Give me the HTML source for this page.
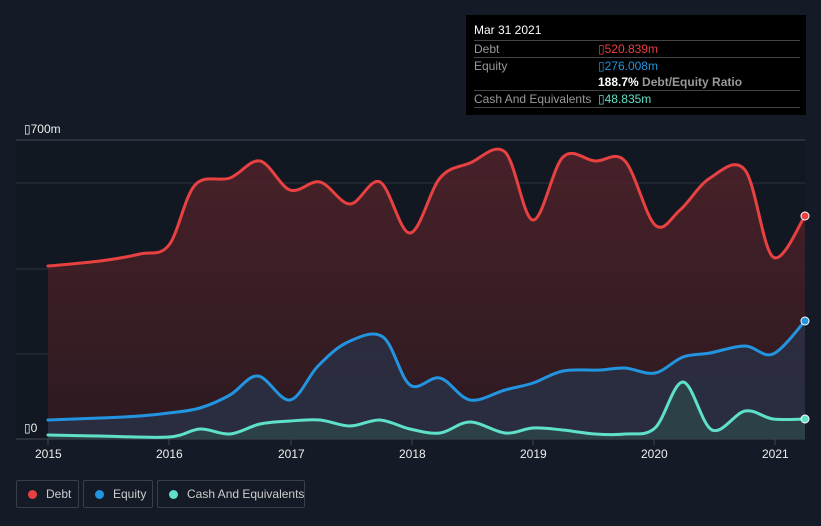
<!DOCTYPE html>
<html><head><meta charset="utf-8"><style>
body{margin:0;width:821px;height:526px;background:#151b26;font-family:"Liberation Sans",sans-serif;overflow:hidden;position:relative}
.tip{position:absolute;left:466px;top:15px;width:340px;height:100px;background:#000;color:#fff;font-size:12px}
.row{position:absolute;left:8px;right:6px;border-top:1px solid #444;height:17px;line-height:17px;color:#999;white-space:nowrap}
.row span{position:absolute;left:124px}
.leg{position:absolute;top:480px;height:26px;border:1px solid #3a404a;border-radius:2px;color:#ccc;font-size:12px;line-height:26px;white-space:nowrap}
.leg i{display:inline-block;width:9px;height:9px;border-radius:50%;margin:0 9px 0 11px;vertical-align:-1px}
.ax{position:absolute;color:#eee;font-size:12px}
</style></head><body>
<svg id="s" width="821" height="526" style="position:absolute;left:0;top:0">
<defs>
<linearGradient id="gd" x1="0" y1="0" x2="0" y2="1"><stop offset="0" stop-color="#55232a" stop-opacity=".8"/><stop offset="1" stop-color="#331a20" stop-opacity=".8"/></linearGradient>
</defs>
<rect x="16" y="140" width="789" height="299" fill="#121822"/>
<g stroke="#2c323c" stroke-width="1"><line x1="16" y1="140" x2="805" y2="140" stroke="#444a54"/><line x1="16" y1="183" x2="805" y2="183"/><line x1="16" y1="269" x2="805" y2="269"/><line x1="16" y1="354" x2="805" y2="354"/><line x1="16" y1="439" x2="805" y2="439" stroke="#444a54"/></g>
<path id="fd" fill="url(#gd)"/>
<path id="fe" fill="#2a3042" opacity=".9"/>
<path id="fc" fill="#2c4448" opacity=".9"/>
<g fill="none" stroke-width="3" stroke-linejoin="round" stroke-linecap="round">
<path id="ld" stroke="#e84142"/>
<path id="le" stroke="#2394df"/>
<path id="lc" stroke="#5fe0c8"/>
</g>
<circle cx="805" cy="216" r="4" fill="#e84142" stroke="#fff" stroke-width="1"/>
<circle cx="805" cy="321" r="4" fill="#2394df" stroke="#fff" stroke-width="1"/>
<circle cx="805" cy="419" r="4" fill="#5fe0c8" stroke="#fff" stroke-width="1"/>
<g stroke="#444a54"><line x1="48" y1="439" x2="48" y2="445"/><line x1="169" y1="439" x2="169" y2="445"/><line x1="291" y1="439" x2="291" y2="445"/><line x1="412" y1="439" x2="412" y2="445"/><line x1="533" y1="439" x2="533" y2="445"/><line x1="654" y1="439" x2="654" y2="445"/><line x1="775" y1="439" x2="775" y2="445"/></g>
</svg>
<script>
function sm(p){var d="M"+p[0][0]+","+p[0][1];for(var i=0;i<p.length-1;i++){var a=p[i-1]||p[i],b=p[i],c=p[i+1],e=p[i+2]||c;var t=6;d+=" C"+(b[0]+(c[0]-a[0])/t)+","+(b[1]+(c[1]-a[1])/t)+" "+(c[0]-(e[0]-b[0])/t)+","+(c[1]-(e[1]-b[1])/t)+" "+c[0]+","+c[1];}return d;}
function P(s){return s.split(" ").map(function(x){return x.split(",").map(Number)});}
var D=P("48,266 100,261 140,254 169,245 195,185 230,178 260,161 290,190 320,182 350,204 380,182 410,233 440,178 470,163 505,152 533,220 563,157 595,161 625,161 655,225 680,210 710,178 745,170 773,257 805,216");
var E=P("48,420 100,418 140,416 169,413 200,408 230,395 258,376 290,400 318,366 348,342 383,337 410,385 440,378 470,400 505,390 533,383 563,371 600,370 625,368 655,373 683,357 710,353 745,346 773,354 805,321");
var C=P("48,435 100,436 169,437 200,429 230,434 260,424 290,421 320,420 350,426 380,420 410,429 440,433 470,422 505,433 533,428 563,430 595,434 625,434 655,428 683,382 712,430 745,411 773,419 805,419");
[[D,"ld","fd"],[E,"le","fe"],[C,"lc","fc"]].forEach(function(q){var s=sm(q[0]);document.getElementById(q[1]).setAttribute("d",s);document.getElementById(q[2]).setAttribute("d",s+" L805,439 L48,439 Z");});
</script>
<div class="ax" style="left:24px;top:122px">▯700m</div>
<div class="ax" style="left:24px;top:421px">▯0</div>
<div class="ax" style="left:35px;top:447px">2015</div>
<div class="ax" style="left:156px;top:447px">2016</div>
<div class="ax" style="left:278px;top:447px">2017</div>
<div class="ax" style="left:399px;top:447px">2018</div>
<div class="ax" style="left:520px;top:447px">2019</div>
<div class="ax" style="left:641px;top:447px">2020</div>
<div class="ax" style="left:762px;top:447px">2021</div>
<div class="tip">
<div style="position:absolute;left:8px;top:8px;font-size:12px">Mar 31 2021</div>
<div class="row" style="top:25px">Debt<span style="color:#e84142">▯520.839m</span></div>
<div class="row" style="top:42px">Equity<span style="color:#2394df">▯276.008m</span></div>
<div class="row" style="top:59px;border-top:none"><span style="color:#fff;font-weight:bold">188.7% <b style="color:#999">Debt/Equity Ratio</b></span></div>
<div class="row" style="top:75px">Cash And Equivalents<span style="color:#5fe0c8">▯48.835m</span></div>
<div class="row" style="top:92px;height:0"></div>
</div>
<div class="leg" style="left:16px;width:61px"><i style="background:#e84142"></i>Debt</div>
<div class="leg" style="left:83px;width:68px"><i style="background:#2394df"></i>Equity</div>
<div class="leg" style="left:157px;width:146px"><i style="background:#5fe0c8"></i>Cash And Equivalents</div>
</body></html>
